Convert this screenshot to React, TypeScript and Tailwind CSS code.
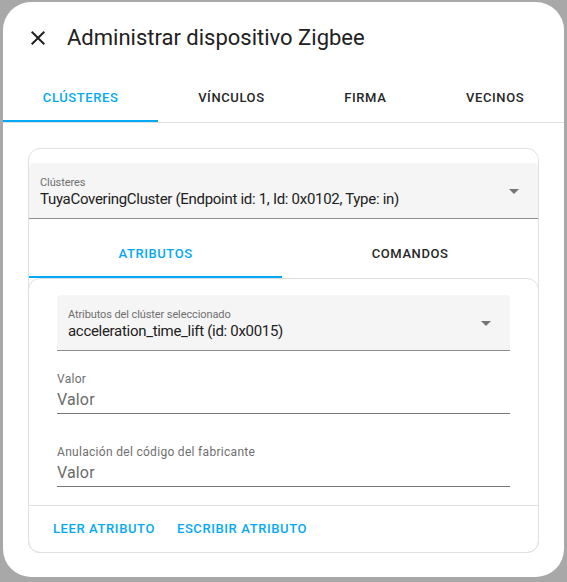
import React from "react";

const outerTabs = ["Clústeres", "Vínculos", "Firma", "Vecinos"];
const innerTabs = ["Atributos", "Comandos"];

function MenuDown() {
  return (
    <svg viewBox="0 0 24 24" className="w-6 h-6 shrink-0" fill="#757575">
      <path d="M7,10L12,15L17,10H7Z" />
    </svg>
  );
}

function SelectField({ label, value }: { label: string; value: string }) {
  return (
    <div className="h-[56px] bg-[#f5f5f5] rounded-t-[4px] border-b border-[#8c8c8c] flex items-center pl-[11px] pr-[12px]">
      <div className="flex-1 min-w-0 self-start pt-[12px]">
        <div className="text-[11px] leading-4 tracking-[-0.1px] text-[#6f6f6f]">{label}</div>
        <div className="text-[15px] leading-4 tracking-[-0.3px] text-[#212121] whitespace-nowrap">{value}</div>
      </div>
      <MenuDown />
    </div>
  );
}

function TextField({ label, className }: { label: string; className?: string }) {
  return (
    <div className={className}>
      <div className="text-[12px] leading-4 tracking-[0.3px] text-[#6f6f6f]">{label}</div>
      <div className="h-[27px] flex items-center border-b border-[#7a7a7a] text-[16px] tracking-[0.15px] text-[#6b6b6b]">
        Valor
      </div>
    </div>
  );
}

function Tabs({ tabs, active }: { tabs: string[]; active: number }) {
  return (
    <div className="flex h-[48px]">
      {tabs.map((t, i) => (
        <div
          key={t}
          className={`relative flex-auto flex items-center justify-center text-[13px] font-medium uppercase tracking-[0.6px] ${
            i === active ? "text-[#03a9f4]" : "text-[#262626]"
          }`}
        >
          {t}
          {i === active && <span className="absolute left-0 right-0 bottom-0 h-[2px] bg-[#03a9f4]" />}
        </div>
      ))}
    </div>
  );
}

export default function App() {
  return (
    <div className="w-[567px] h-[582px] bg-[#a8a8a8] pt-[2px] pl-[3px] overflow-hidden font-[Roboto,sans-serif]">
      <div className="w-[561px] h-[575px] bg-white rounded-[28px] flex flex-col overflow-hidden">
        {/* header */}
        <div className="h-[72px] flex items-center pl-[23px] shrink-0">
          <svg viewBox="0 0 24 24" className="w-6 h-6" fill="#212121">
            <path d="M19,6.41L17.59,5L12,10.59L6.41,5L5,6.41L10.59,12L5,17.59L6.41,19L12,13.41L17.59,19L19,17.59L13.41,12L19,6.41Z" />
          </svg>
          <h2 className="ml-[17px] text-[22px] leading-7 text-[#212121]">Administrar dispositivo Zigbee</h2>
        </div>

        <div className="border-b border-[#e0e0e0]">
          <Tabs tabs={outerTabs} active={0} />
        </div>

        {/* cluster card */}
        <div className="mx-[25px] mt-[25px] border border-[#e0e0e0] rounded-[12px] flex flex-col">
          <div className="pt-[14px]">
            <SelectField
              label="Clústeres"
              value="TuyaCoveringCluster (Endpoint id: 1, Id: 0x0102, Type: in)"
            />
          </div>
          <div className="mt-[11px]">
            <Tabs tabs={innerTabs} active={0} />
          </div>

          <div className="-mx-px -mb-px border border-[#e0e0e0] rounded-[12px]">
            <div className="px-[28px] pt-[16px] pb-[18px]">
              <SelectField label="Atributos del clúster seleccionado" value="acceleration_time_lift (id: 0x0015)" />
              <TextField label="Valor" className="mt-[20px]" />
              <TextField label="Anulación del código del fabricante" className="mt-[30px]" />
            </div>
            <div className="border-t border-[#e0e0e0] h-[47px] flex items-center pl-[24px] gap-[22px] text-[13px] font-medium uppercase tracking-[0.6px] text-[#03a9f4]">
              <span>Leer atributo</span>
              <span>Escribir atributo</span>
            </div>
          </div>
        </div>
      </div>
    </div>
  );
}
